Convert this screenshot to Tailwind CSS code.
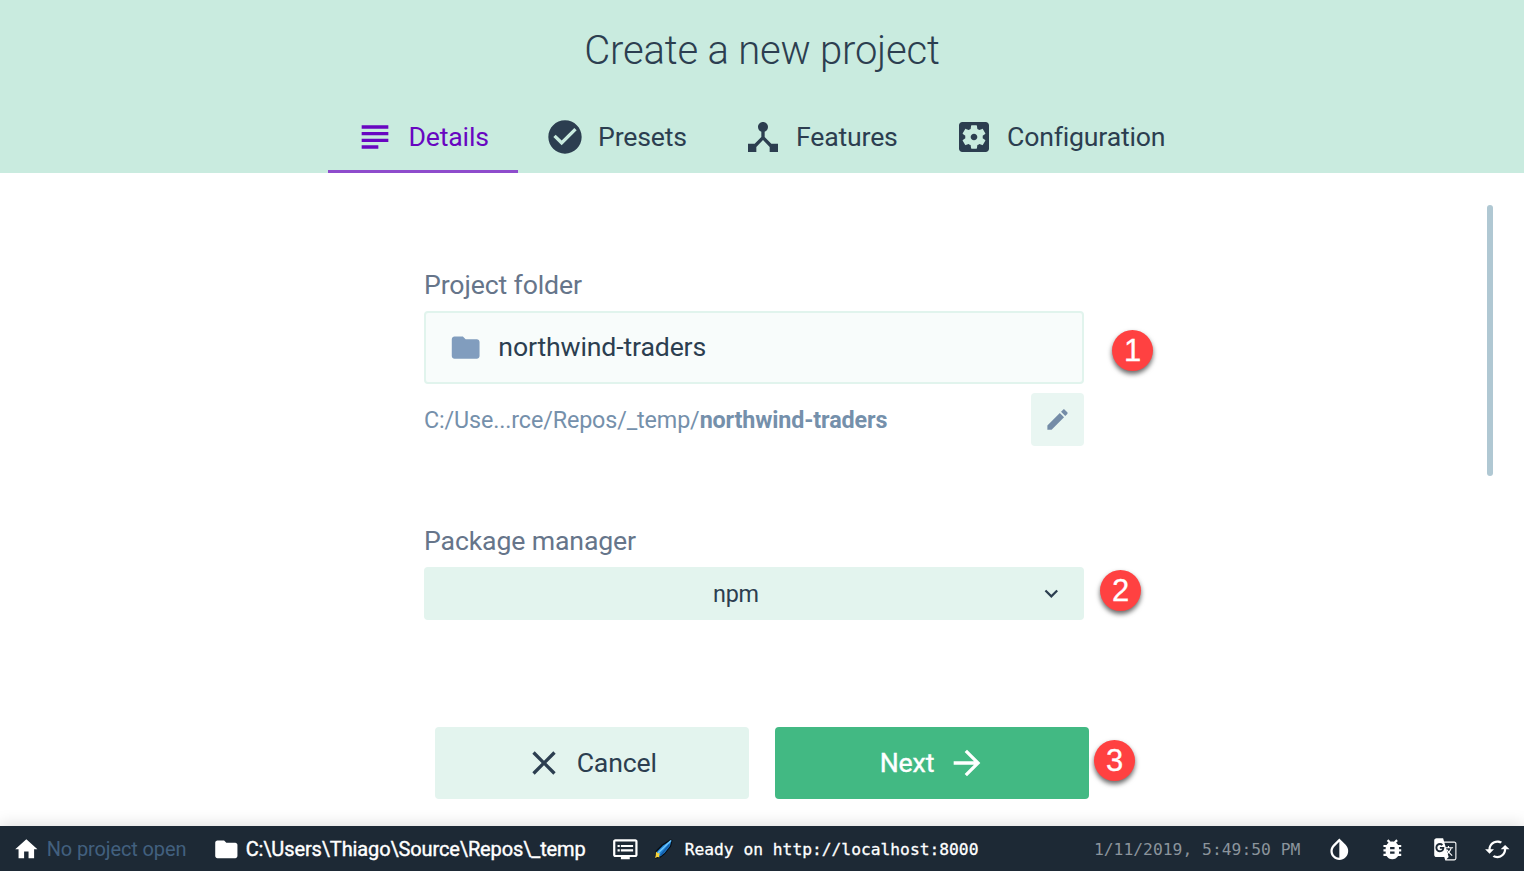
<!DOCTYPE html>
<html lang="en">
<head>
<meta charset="utf-8">
<title>Create a new project</title>
<script src="https://cdn.jsdelivr.net/npm/@tailwindcss/browser@4"></script>
</head>
<body class="relative flex h-screen flex-col overflow-hidden bg-white font-['Roboto',sans-serif] text-[#2c3e50]">

<header class="flex h-[173px] shrink-0 flex-col items-center bg-[#c9ebdf]">
  <h1 class="flex h-[101px] items-center text-[40px] leading-none font-light tracking-[-0.2px] whitespace-nowrap">Create a new project</h1>
  <nav class="flex h-[72px] text-[26.67px] leading-[72px] tracking-[-0.19px] whitespace-nowrap">
    <a class="flex w-[190px] items-center gap-[13px] border-b-[3px] border-[#8e4ccc] pt-[3px] pl-[27px] leading-[66px] text-[#6806c1]">
      <svg class="size-10 shrink-0" viewBox="0 0 24 24" fill="currentColor"><path d="M14 17H4v2h10v-2zm6-8H4v2h16V9zM4 15h16v-2H4v2zM4 5v2h16V5H4z"/></svg>
      <span class="pl-[0.5px]">Details</span>
    </a>
    <a class="flex w-[198px] items-center gap-[13px] pl-[27px]">
      <svg class="size-10 shrink-0" viewBox="0 0 24 24" fill="currentColor"><path d="M12 2C6.48 2 2 6.48 2 12s4.48 10 10 10 10-4.48 10-10S17.52 2 12 2zm-2 15l-5-5 1.41-1.41L10 14.17l7.59-7.59L19 8l-9 9z"/></svg>
      <span>Presets</span>
    </a>
    <a class="flex w-[211px] items-center gap-[13px] pl-[27px]">
      <svg class="size-10 shrink-0" viewBox="0 0 24 24" fill="currentColor"><path d="M17 16l-4-4V8.82C14.16 8.4 15 7.3 15 6c0-1.66-1.34-3-3-3S9 4.34 9 6c0 1.3.84 2.4 2 2.82V12l-4 4H3v5h5v-3.05l4-4.2 4 4.2V21h5v-5h-4z"/></svg>
      <span>Features</span>
    </a>
    <a class="flex w-[269px] items-center gap-[13px] pl-[27px]">
      <svg class="size-10 shrink-0" viewBox="0 0 24 24" fill="currentColor"><path d="M12 10c-1.1 0-2 .9-2 2s.9 2 2 2 2-.9 2-2-.9-2-2-2zm7-7H5c-1.11 0-2 .9-2 2v14c0 1.1.89 2 2 2h14c1.11 0 2-.9 2-2V5c0-1.1-.89-2-2-2zm-1.75 9c0 .23-.02.46-.05.68l1.48 1.16c.13.11.17.3.08.45l-1.4 2.42c-.09.15-.27.21-.43.15l-1.74-.7c-.36.28-.76.51-1.18.69l-.26 1.85c-.03.17-.18.3-.35.3h-2.8c-.17 0-.32-.13-.35-.29l-.26-1.85c-.43-.18-.82-.41-1.18-.69l-1.74.7c-.16.06-.34 0-.43-.15l-1.4-2.42c-.09-.15-.05-.34.08-.45l1.48-1.16c-.03-.23-.05-.46-.05-.69 0-.23.02-.46.05-.68l-1.48-1.16c-.13-.11-.17-.3-.08-.45l1.4-2.42c.09-.15.27-.21.43-.15l1.74.7c.36-.28.76-.51 1.18-.69l.26-1.85c.03-.17.18-.3.35-.3h2.8c.17 0 .32.13.35.29l.26 1.85c.43.18.82.41 1.18.69l1.74-.7c.16-.06.34 0 .43.15l1.4 2.42c.09.15.05.34-.08.45l-1.48 1.16c.03.23.05.46.05.69z"/></svg>
      <span>Configuration</span>
    </a>
  </nav>
</header>

<main class="flex h-[653px] shrink-0 justify-between pr-[31px] pl-[424px]">
  <div class="flex w-[665px] flex-col">
    <section class="mt-[92px] w-[660px]">
      <label class="block h-[46px] text-[26.67px] leading-[40px] tracking-[-0.13px] text-[#66758a]">Project folder</label>
      <div class="flex h-[73px] items-center rounded-[4px] border-2 border-[#e1f4ed] bg-[#f8fcfb] pl-[23px]">
        <svg class="size-[33.33px]" viewBox="0 0 24 24" fill="#819dbe"><path d="M10 4H4c-1.1 0-1.99.9-1.99 2L2 18c0 1.1.9 2 2 2h16c1.1 0 2-.9 2-2V8c0-1.1-.9-2-2-2h-8l-2-2z"/></svg>
        <span class="ml-4 text-[26.67px] leading-none tracking-[-0.15px]">northwind-traders</span>
      </div>
      <div class="mt-[9px] flex h-[53px] items-center justify-between">
        <span class="pt-[2px] text-[23.33px] leading-none tracking-[-0.13px] whitespace-nowrap text-[#7590ab]">C:/Use...rce/Repos/_temp/<b class="font-bold">northwind-traders</b></span>
        <button class="flex size-[53px] items-center justify-center rounded-[4px] bg-[#e9f6f2]">
          <svg class="size-[27px]" viewBox="0 0 24 24" fill="#748ca7"><path d="M3 17.25V21h3.75L17.81 9.94l-3.75-3.75L3 17.25zM20.71 7.04c.39-.39.39-1.02 0-1.41l-2.34-2.34c-.39-.39-1.02-.39-1.41 0l-1.83 1.83 3.75 3.75 1.83-1.83z"/></svg>
        </button>
      </div>
    </section>
    <section class="mt-[75px] w-[660px]">
      <label class="block h-[46px] text-[26.67px] leading-[40px] tracking-[-0.14px] text-[#66758a]">Package manager</label>
      <div class="flex h-[53px] items-center rounded-[4px] bg-[#e3f4ee] pr-[19.5px]">
        <span class="flex-1 pt-[2px] pl-[10px] text-center text-[23.33px] leading-none tracking-[-0.2px]">npm</span>
        <svg class="mt-px size-[26.67px]" viewBox="0 0 24 24" fill="currentColor"><path d="M7.41 7.84L12 12.42l4.59-4.58L18 9.25l-6 6-6-6z"/></svg>
      </div>
    </section>
    <div class="mt-[107px] flex gap-[26px] pl-[11px] text-[26.67px] leading-none tracking-[-0.15px]">
      <button class="flex h-[72px] w-[314px] items-center justify-center gap-[13px] rounded-[4px] bg-[#e3f4ee] pr-[3.5px]">
        <svg class="size-10" viewBox="0 0 24 24" fill="currentColor"><path d="M19 6.41L17.59 5 12 10.59 6.41 5 5 6.41 10.59 12 5 17.59 6.41 19 12 13.41 17.59 19 19 17.59 13.41 12z"/></svg>
        <span>Cancel</span>
      </button>
      <button class="flex h-[72px] w-[314px] items-center justify-center gap-[13px] rounded-[4px] bg-[#42b983] pl-[3px] text-white">
        <span class="[-webkit-text-stroke:0.4px_white]">Next</span>
        <svg class="size-10" viewBox="0 0 24 24" fill="currentColor"><path d="M12 4l-1.41 1.41L16.17 11H4v2h12.17l-5.58 5.59L12 20l8-8z"/></svg>
      </button>
    </div>
  </div>
  <div class="mt-8 h-[271px] w-[6px] rounded-full bg-[#b0c8d3]"></div>
</main>

<footer class="relative flex h-[45px] shrink-0 items-center bg-[#1d2935] pt-px text-[20px] leading-none whitespace-nowrap text-white shadow-[0_-2px_16px_rgba(0,0,0,0.13)]">
  <div class="flex w-[200px] items-center gap-[7px] pl-[13px]">
    <svg class="size-[26.67px] shrink-0" viewBox="0 0 24 24" fill="currentColor"><path d="M10 20v-6h4v6h5v-8h3L12 3 2 12h3v8z"/></svg>
    <span class="tracking-[-0.12px] text-[#42607f]">No project open</span>
  </div>
  <div class="flex w-[399px] items-center gap-[6px] pl-[13px]">
    <svg class="size-[26.67px] shrink-0" viewBox="0 0 24 24" fill="currentColor"><path d="M10 4H4c-1.1 0-1.99.9-1.99 2L2 18c0 1.1.9 2 2 2h16c1.1 0 2-.9 2-2V8c0-1.1-.9-2-2-2h-8l-2-2z"/></svg>
    <span class="tracking-[-0.12px] [-webkit-text-stroke:0.4px_white]">C:\Users\Thiago\Source\Repos\_temp</span>
  </div>
  <div class="flex flex-1 items-center pl-[13px] font-['DejaVu_Sans_Mono',monospace]">
    <svg class="size-[26.67px] shrink-0" viewBox="0 0 24 24" fill="currentColor"><path d="M21 3H3c-1.1 0-2 .9-2 2v12c0 1.1.9 2 2 2h5v2h8v-2h5c1.1 0 1.99-.9 1.99-2L23 5c0-1.1-.9-2-2-2zm0 14H3V5h18v12zm-2-9H8v2h11V8zm0 4H8v2h11v-2zM7 8H5v2h2V8zm0 4H5v2h2v-2z"/></svg>
    <svg class="ml-[15px] h-5 w-[19px] shrink-0" viewBox="0 0 19 20"><path d="M1 19.500L1.500 12 8 5.500 16 .5l2.500.500-1.500 6.500-6 7.500-5 4z" fill="#050b12"/><path d="M3 17V12.500L9 6.500l8.500-5.500-1.500 6-5.500 7-4.500 3.500z" fill="#2186d8"/><path d="M4 14L17 1.500" stroke="#6ec5fa" stroke-width="1.600" fill="none"/><path d="M6.500 16.500L15.500 5.500" stroke="#155ca8" stroke-width="1.500"/><path d="M2 12.500l1.500 1.500 2.500.5-1 2 .5 2-2-.5L1 19l.7-2.500z" fill="#f7d23b"/></svg>
    <span class="ml-[12px] pt-[2px] text-[16.27px] [-webkit-text-stroke:0.3px_white]">Ready on http://localhost:8000</span>
    <span class="ml-auto pt-[2px] text-[16.33px] text-[#8b949c]">1/11/2019, 5:49:50 PM</span>
  </div>
  <div class="flex items-center gap-[26px] pr-[13px] pl-[26px]">
    <svg class="size-[26.67px]" viewBox="0 0 24 24" fill="currentColor"><path d="M17.66 7.93L12 2.27 6.34 7.93c-3.12 3.12-3.12 8.19 0 11.31C7.9 20.8 9.95 21.58 12 21.58c2.05 0 4.1-.78 5.66-2.34 3.12-3.12 3.12-8.19 0-11.31zM12 19.59c-1.6 0-3.11-.62-4.24-1.76C6.62 16.69 6 15.19 6 13.590s.62-3.110 1.760-4.240L12 5.100v14.490z"/></svg>
    <svg class="size-[26.67px]" viewBox="0 0 24 24" fill="currentColor"><path d="M20 8h-2.810c-.45-.78-1.070-1.450-1.820-1.960L17 4.410 15.590 3l-2.170 2.170C12.960 5.060 12.490 5 12 5c-.49 0-.96.06-1.410.17L8.410 3 7 4.410l1.620 1.630C7.880 6.550 7.260 7.220 6.810 8H4v2h2.090c-.05.33-.09.66-.09 1v1H4v2h2v1c0 .34.04.67.09 1H4v2h2.810c1.040 1.790 2.970 3 5.190 3s4.150-1.210 5.190-3H20v-2h-2.090c.05-.33.09-.66.09-1v-1h2v-2h-2v-1c0-.34-.04-.67-.09-1H20V8zm-6 8h-4v-2h4v2zm0-4h-4v-2h4v2z"/></svg>
    <svg class="size-[26.67px]" viewBox="0 0 24 24" fill="currentColor"><path d="M20,5h-9.12L10,2H4C2.9,2,2,2.9,2,4v13c0,1.1,0.9,2,2,2h7l1,3h8c1.1,0,2-0.9,2-2V7C22,5.9,21.1,5,20,5z M7.17,14.59c-2.25,0-4.09-1.83-4.09-4.09s1.83-4.09,4.09-4.09c1.04,0,1.99,0.37,2.74,1.07l0.07,0.06l-1.23,1.18L8.69,8.67C8.4,8.4,7.9,8.08,7.17,8.08c-1.31,0-2.37,1.09-2.37,2.42s1.07,2.42,2.37,2.42c1.37,0,1.96-0.87,2.12-1.46H7.08V9.91h3.95l0.01,0.07c0.04,0.21,0.05,0.4,0.05,0.61C11.09,12.94,9.48,14.59,7.17,14.59z M13.2,12.88c0.33,0.6,0.74,1.18,1.19,1.7l-0.54,0.53L13.2,12.88z M13.97,12.12h-0.99l-0.31-1.04h3.99c0,0-0.34,1.31-1.56,2.74C14.58,13.2,14.2,12.57,13.97,12.12z M21,20c0,0.55-0.45,1-1,1h-7l2-2l-0.81-2.77l0.92-0.92L17.79,18l0.73-0.73l-2.71-2.68c0.9-1.03,1.6-2.25,1.92-3.51H19v-1.04h-3.64V9h-1.04v1.04h-1.96L11.18,6H20c0.55,0,1,0.45,1,1V20z"/></svg>
    <svg class="size-[26.67px]" viewBox="0 0 24 24" fill="currentColor"><path d="M19 8l-4 4h3c0 3.310-2.690 6-6 6-1.010 0-1.970-.25-2.800-.7l-1.460 1.460C8.970 19.540 10.430 20 12 20c4.420 0 8-3.580 8-8h3l-4-4zM6 12c0-3.310 2.690-6 6-6 1.010 0 1.970.25 2.800.7l1.460-1.460C15.030 4.460 13.570 4 12 4c-4.420 0-8 3.580-8 8H1l4 4 4-4H6z"/></svg>
  </div>
</footer>

<!-- Numbered step markers laid over the form -->
<div class="absolute top-[330px] left-[1112px] flex size-[41px] items-center justify-center rounded-full bg-[#ff4141] font-['Liberation_Sans',sans-serif] text-[31px] leading-none text-white shadow-[0_3px_5px_rgba(0,0,0,0.6)] [-webkit-text-stroke:0.3px_white]">1</div>
<div class="absolute top-[570px] left-[1100px] flex size-[41px] items-center justify-center rounded-full bg-[#ff4141] font-['Liberation_Sans',sans-serif] text-[31px] leading-none text-white shadow-[0_3px_5px_rgba(0,0,0,0.6)] [-webkit-text-stroke:0.3px_white]">2</div>
<div class="absolute top-[740px] left-[1094px] flex size-[41px] items-center justify-center rounded-full bg-[#ff4141] font-['Liberation_Sans',sans-serif] text-[31px] leading-none text-white shadow-[0_3px_5px_rgba(0,0,0,0.6)] [-webkit-text-stroke:0.3px_white]">3</div>
</body>
</html>
